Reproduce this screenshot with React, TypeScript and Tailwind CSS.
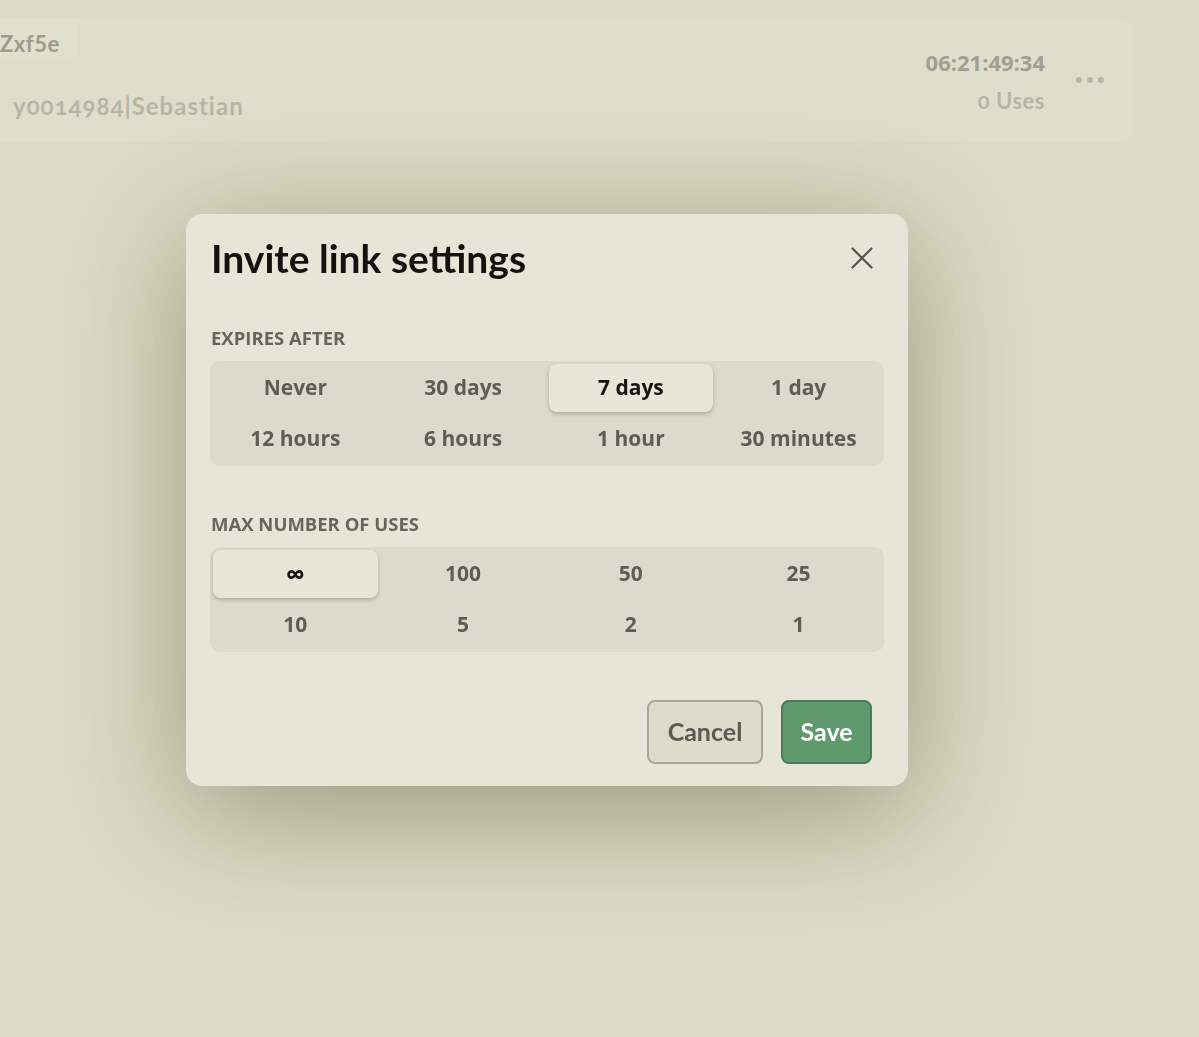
import { useState } from "react";

const expiryOptions = ["Never", "30 days", "7 days", "1 day", "12 hours", "6 hours", "1 hour", "30 minutes"];
const useOptions = ["∞", "100", "50", "25", "10", "5", "2", "1"];

const headFont = "font-['Lato','Open_Sans',sans-serif]";
const bodyFont = "font-['Open_Sans','Noto_Sans',sans-serif]";

function Segmented({
  options,
  value,
  onChange,
}: {
  options: string[];
  value: string;
  onChange: (v: string) => void;
}) {
  return (
    <div className="grid grid-cols-4 gap-[3px] rounded-[10px] bg-[#dcdacd] p-[3px]">
      {options.map((opt) => {
        const active = opt === value;
        const size = opt === "∞" ? "text-[27px]" : "text-[21px]";
        return (
          <button
            key={opt}
            onClick={() => onChange(opt)}
            className={
              active
                ? `h-[48px] rounded-[8px] bg-[#e8e6d8] ${size} font-bold text-[#151512] shadow-[0_2px_4px_rgba(0,0,0,0.22)] ${bodyFont}`
                : `h-[48px] rounded-[8px] ${size} font-bold text-[#5e5d55] ${bodyFont}`
            }
          >
            {opt}
          </button>
        );
      })}
    </div>
  );
}

export default function App() {
  const [expiry, setExpiry] = useState("7 days");
  const [uses, setUses] = useState("∞");

  return (
    <div className="min-h-[1037px] bg-[#dcdbc6]">
      <div className="pt-[19px] pr-[65px]">
        <div className="flex h-[123px] rounded-r-[12px] bg-[#dfdecb]">
          <div className="flex flex-col">
            <div className={`h-[43px] w-[78px] rounded-br-[6px] bg-[#e1e0cd] pt-[12px] text-[22px] font-bold leading-[26px] tracking-[0.5px] text-[#9c9b8c] ${headFont}`}>
              Zxf5e
            </div>
            <div className={`mt-[31px] pl-[13px] text-[24px] font-bold leading-[26px] tracking-[1px] text-[#b7b6a6] oldstyle-nums ${headFont}`}>
              y0014984|Sebastian
            </div>
          </div>
          <div className="ml-auto flex flex-col items-end pt-[30px]">
            <div className={`text-[22px] font-bold leading-[26px] text-[#a09f90] ${bodyFont}`}>06:21:49:34</div>
            <div className={`mt-[13px] text-[22px] font-bold leading-[26px] tracking-[0.5px] text-[#b6b5a4] oldstyle-nums ${headFont}`}>
              0 Uses
            </div>
          </div>
          <div className="ml-[31px] mr-[30px] flex items-center gap-[5px] pb-[2px]">
            <span className="h-[6px] w-[6px] rounded-full bg-[#b5b4a5]" />
            <span className="h-[6px] w-[6px] rounded-full bg-[#b5b4a5]" />
            <span className="h-[6px] w-[6px] rounded-full bg-[#b5b4a5]" />
          </div>
        </div>
      </div>

      <div className="fixed inset-0 flex items-start pl-[186px] pt-[214px]">
        <div className="w-[722px] rounded-[16px] bg-[#e7e5d7] px-[24px] pb-[22px] pt-[22px] shadow-[0_24px_120px_rgba(70,70,40,0.45)]">
          <div className="flex h-[44px] items-center justify-between pl-px">
            <h1 className={`text-[39px] font-bold leading-[44px] text-[#121210] ${headFont}`}>Invite link settings</h1>
            <button className="mr-[10px] text-[#555550]">
              <svg width="24" height="24" viewBox="0 0 24 24" fill="none" stroke="currentColor" strokeWidth="2.2" strokeLinecap="round">
                <path d="M2.5 2.5 L21.5 21.5 M21.5 2.5 L2.5 21.5" />
              </svg>
            </button>
          </div>

          <div className={`mt-[46px] pl-px text-[18.5px] font-bold uppercase leading-[24px] text-[#67665d] ${bodyFont}`}>
            Expires after
          </div>
          <div className="mt-[11px]">
            <Segmented options={expiryOptions} value={expiry} onChange={setExpiry} />
          </div>

          <div className={`mt-[46px] pl-px text-[18.5px] font-bold uppercase leading-[24px] text-[#67665d] ${bodyFont}`}>
            Max number of uses
          </div>
          <div className="mt-[11px]">
            <Segmented options={useOptions} value={uses} onChange={setUses} />
          </div>

          <div className="mr-[12px] mt-[48px] flex justify-end gap-[18px]">
            <button className={`h-[64px] w-[116px] rounded-[8px] border-2 border-[#a9a795] bg-[#dddbc9] text-[25px] font-bold text-[#5a5a50] ${headFont}`}>
              Cancel
            </button>
            <button className={`h-[64px] w-[91px] rounded-[8px] border-2 border-[#4a7a57] bg-[#5f9a6e] text-[25px] font-bold text-white ${headFont}`}>
              Save
            </button>
          </div>
        </div>
      </div>
    </div>
  );
}
